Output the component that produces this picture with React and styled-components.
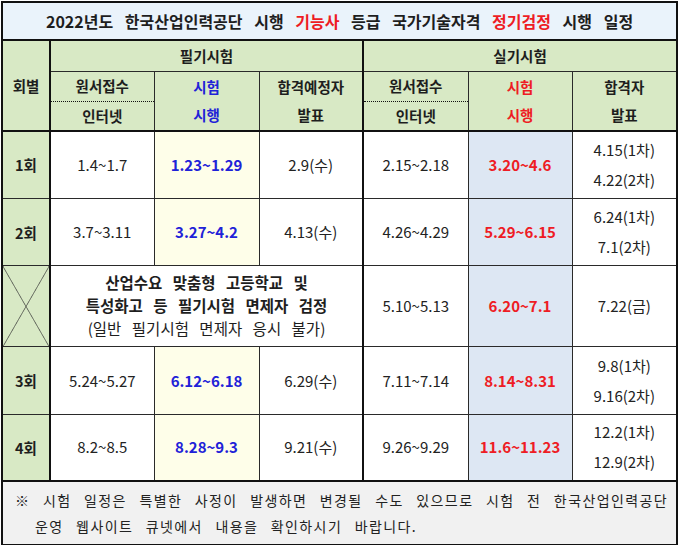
import React from "react";
import styled, { createGlobalStyle } from "styled-components";

const GlobalStyle = createGlobalStyle`
  body {
    margin: 0;
    background: #fff;
  }
`;

const LINE = "#2a2a2a";
const GREEN = "#d8e9c5";
const YELLOW = "#fefee9";
const BLUE = "#dde7f3";
const INK_BLUE = "#1f22d8";
const INK_RED = "#ee1c24";

const Sheet = styled.table`
  border-collapse: collapse;
  table-layout: fixed;
  width: 676px;
  margin: 1px 0 0 1px;
  border: 2px solid #111;
  font-family: "Noto Sans CJK KR", "Malgun Gothic", sans-serif;
  color: #1e1e1e;
`;

const Col = styled.col`
  width: ${(p) => p.$w}px;
  border-right: ${(p) => (p.$thick ? "2px solid #111" : `1px solid ${LINE}`)};
`;

const Row = styled.tr`
  height: ${(p) => p.$h}px;
  ${(p) => p.$thickTop && "border-top: 2px solid #111;"}
`;

const TitleCell = styled.td`
  background: #eaf3fb;
  text-align: center;
  font-size: 16px;
  font-weight: 700;
  word-spacing: 8px;
  border-bottom: 2px solid #111;
  padding: 0;
`;

const Red = styled.span`
  color: ${INK_RED};
`;

const HeadCell = styled.td`
  background: ${GREEN};
  text-align: center;
  vertical-align: middle;
  font-size: 14.5px;
  font-weight: 700;
  line-height: 28px;
  color: ${(p) => (p.$tone === "blue" ? INK_BLUE : p.$tone === "red" ? INK_RED : "#1e1e1e")};
  border-left: 1px solid ${LINE};
  border-bottom: ${(p) => (p.$dotted ? `1px dotted #111` : `1px solid ${LINE}`)};
  padding: 0;
`;

const RoundCell = styled.td`
  background: ${GREEN};
  text-align: center;
  font-size: 14.5px;
  font-weight: 700;
  border-bottom: 1px solid ${LINE};
  padding: 0;
`;

const CrossCell = styled.td`
  padding: 0;
  border-bottom: 1px solid ${LINE};
  background-color: ${GREEN};
  background-image:
    linear-gradient(to top right, transparent calc(50% - 0.6px), #333 50%, transparent calc(50% + 0.6px)),
    linear-gradient(to bottom right, transparent calc(50% - 0.6px), #333 50%, transparent calc(50% + 0.6px));
`;

const Cell = styled.td`
  background: ${(p) => p.$bg || "#fff"};
  text-align: center;
  vertical-align: middle;
  font-size: 15px;
  font-weight: ${(p) => (p.$bold ? 700 : 400)};
  line-height: 30px;
  color: ${(p) => (p.$tone === "blue" ? INK_BLUE : p.$tone === "red" ? INK_RED : "#222")};
  border-bottom: 1px solid ${LINE};
  padding: 0;
  white-space: nowrap;
`;

const ExemptCell = styled.td`
  background: #fff;
  text-align: center;
  font-size: 15.5px;
  line-height: 23px;
  word-spacing: 7px;
  border-bottom: 1px solid ${LINE};
  padding: 0 0 2px;
`;

const Strong = styled.div`
  font-weight: 700;
`;

const Note = styled.div`
  font-weight: 400;
`;

const FootCell = styled.td`
  background: #f1f1f1;
  border-top: 2px solid #111;
  font-size: 14px;
  line-height: 26px;
  letter-spacing: 1.4px;
  word-spacing: 8px;
  color: #222;
  padding: 0 4px 0 32px;
  text-indent: -20px;
  white-space: nowrap;
`;

const rounds = [
  {
    name: "1회",
    apply: "1.4~1.7",
    exam: "1.23~1.29",
    pass: "2.9(수)",
    pApply: "2.15~2.18",
    pExam: "3.20~4.6",
    pPass: ["4.15(1차)", "4.22(2차)"],
    h: 68,
  },
  {
    name: "2회",
    apply: "3.7~3.11",
    exam: "3.27~4.2",
    pass: "4.13(수)",
    pApply: "4.26~4.29",
    pExam: "5.29~6.15",
    pPass: ["6.24(1차)", "7.1(2차)"],
    h: 67,
  },
  {
    special: true,
    pApply: "5.10~5.13",
    pExam: "6.20~7.1",
    pPass: ["7.22(금)"],
    h: 81,
  },
  {
    name: "3회",
    apply: "5.24~5.27",
    exam: "6.12~6.18",
    pass: "6.29(수)",
    pApply: "7.11~7.14",
    pExam: "8.14~8.31",
    pPass: ["9.8(1차)", "9.16(2차)"],
    h: 68,
  },
  {
    name: "4회",
    apply: "8.2~8.5",
    exam: "8.28~9.3",
    pass: "9.21(수)",
    pApply: "9.26~9.29",
    pExam: "11.6~11.23",
    pPass: ["12.2(1차)", "12.9(2차)"],
    h: 66,
  },
];

const App = () => {
  return (
    <>
      <GlobalStyle />
      <Sheet>
        <colgroup>
          <Col $w={48} $thick />
          <Col $w={104} />
          <Col $w={105} />
          <Col $w={104} $thick />
          <Col $w={105} />
          <Col $w={104} />
          <Col $w={105} $thick />
        </colgroup>
        <tbody>
          <Row $h={38}>
            <TitleCell colSpan={7}>
              2022년도 한국산업인력공단 시행 <Red>기능사</Red> 등급 국가기술자격{" "}
              <Red>정기검정</Red> 시행 일정
            </TitleCell>
          </Row>
          <Row $h={31} $thickTop>
            <RoundCell rowSpan={3}>회별</RoundCell>
            <HeadCell colSpan={3}>필기시험</HeadCell>
            <HeadCell colSpan={3}>실기시험</HeadCell>
          </Row>
          <Row $h={30}>
            <HeadCell $dotted>원서접수</HeadCell>
            <HeadCell rowSpan={2} $tone="blue">
              시험
              <br />
              시행
            </HeadCell>
            <HeadCell rowSpan={2}>
              합격예정자
              <br />
              발표
            </HeadCell>
            <HeadCell $dotted>원서접수</HeadCell>
            <HeadCell rowSpan={2} $tone="red">
              시험
              <br />
              시행
            </HeadCell>
            <HeadCell rowSpan={2}>
              합격자
              <br />
              발표
            </HeadCell>
          </Row>
          <Row $h={29}>
            <HeadCell>인터넷</HeadCell>
            <HeadCell>인터넷</HeadCell>
          </Row>
          {rounds.map((r, i) => (
            <Row key={i} $h={r.h} $thickTop={i === 0}>
              {r.special ? (
                <>
                  <CrossCell />
                  <ExemptCell colSpan={3}>
                    <Strong>산업수요 맞춤형 고등학교 및</Strong>
                    <Strong>특성화고 등 필기시험 면제자 검정</Strong>
                    <Note>(일반 필기시험 면제자 응시 불가)</Note>
                  </ExemptCell>
                </>
              ) : (
                <>
                  <RoundCell>{r.name}</RoundCell>
                  <Cell>{r.apply}</Cell>
                  <Cell $bg={YELLOW} $bold $tone="blue">
                    {r.exam}
                  </Cell>
                  <Cell>{r.pass}</Cell>
                </>
              )}
              <Cell>{r.pApply}</Cell>
              <Cell $bg={BLUE} $bold $tone="red">
                {r.pExam}
              </Cell>
              <Cell>
                {r.pPass.map((p) => (
                  <div key={p}>{p}</div>
                ))}
              </Cell>
            </Row>
          ))}
          <Row $h={64}>
            <FootCell colSpan={7}>
              ※ 시험 일정은 특별한 사정이 발생하면 변경될 수도 있으므로 시험 전 한국산업인력공단
              <br />
              운영 웹사이트 큐넷에서 내용을 확인하시기 바랍니다.
            </FootCell>
          </Row>
        </tbody>
      </Sheet>
    </>
  );
};

export default App;
